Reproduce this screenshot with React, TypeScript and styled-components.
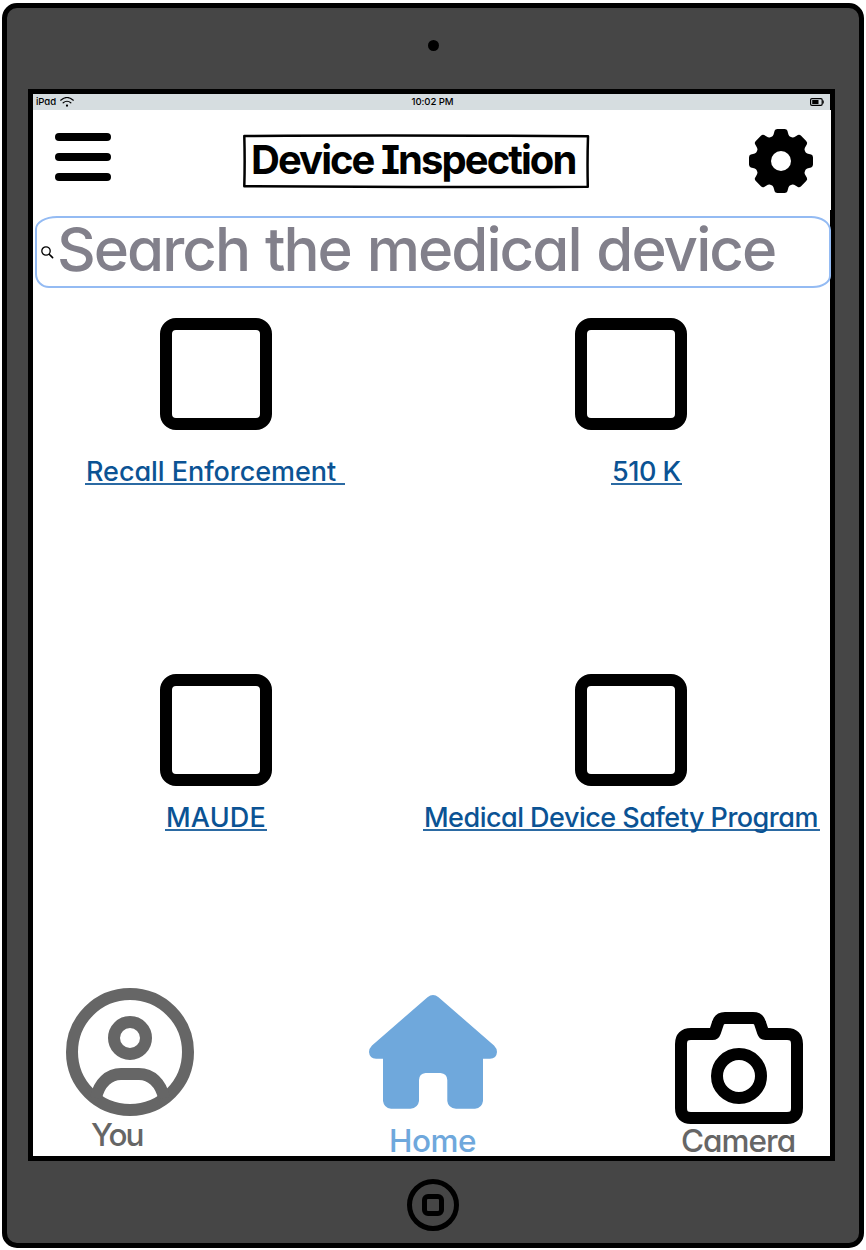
import React from "react";
import styled, { createGlobalStyle } from "styled-components";

const GlobalStyle = createGlobalStyle`
  * { box-sizing: border-box; }
  body { margin: 0; background: #fff; }
`;

const Page = styled.div`
  width: 866px;
  height: 1250px;
  padding: 3px 2px 2px;
  font-family: Inter, "Open Sans", "Liberation Sans", sans-serif;
  font-feature-settings: "cv11" 1;
`;

const Tablet = styled.div`
  display: flex;
  flex-direction: column;
  align-items: center;
  width: 862px;
  height: 1245px;
  border: 5px solid #000;
  border-radius: 15px;
  background: #464646;
`;

const Lens = styled.div`
  width: 11px;
  height: 11px;
  margin: 32px 0 38px;
  border-radius: 50%;
  background: #000;
`;

const Screen = styled.main`
  display: flex;
  flex-direction: column;
  width: 807px;
  height: 1072px;
  flex: none;
  margin-right: 3px;
  border: 5px solid #000;
  background: #fff;
`;

const HomeButton = styled.div`
  display: flex;
  align-items: center;
  justify-content: center;
  width: 52px;
  height: 52px;
  margin-top: 18px;
  border: 5px solid #000;
  border-radius: 50%;
`;

const HomeGlyph = styled.div`
  width: 22px;
  height: 22px;
  border: 5px solid #000;
  border-radius: 6px;
`;

const StatusBar = styled.div`
  display: grid;
  grid-template-columns: 1fr auto 1fr;
  align-items: center;
  height: 16px;
  flex: none;
  padding: 0 6px 0 3px;
  background: #d6dde0;
  font-size: 9.6px;
  font-weight: 500;
  line-height: 16px;
`;

const Carrier = styled.div`
  display: flex;
  align-items: center;
  gap: 4px;
  letter-spacing: -0.1px;
`;

const Clock = styled.time`
  margin-left: 5px;
  letter-spacing: -0.1px;
`;

const BatterySlot = styled.div`
  display: flex;
  justify-content: flex-end;
`;

const Header = styled.header`
  display: flex;
  align-items: flex-start;
  justify-content: space-between;
  height: 100px;
  flex: none;
  margin-right: -1px;
  padding: 19px 18px 0 22px;
  background: #fff;
`;

const MenuButton = styled.div`
  display: flex;
  flex-direction: column;
  gap: 12px;
  width: 56px;
  padding-top: 4px;
`;

const MenuBar = styled.span`
  height: 8px;
  border-radius: 4px;
  background: #000;
`;

const TitleBox = styled.div`
  position: relative;
  width: 348px;
  height: 56px;
  margin: 4px 28px 0 0;
  padding-left: 9px;
`;

const TitleFrame = styled.svg`
  position: absolute;
  inset: 0;
`;

const Title = styled.h1`
  margin: 0;
  font-size: 40px;
  font-weight: 700;
  line-height: 54px;
  letter-spacing: -1.95px;
  white-space: nowrap;
  font-feature-settings: "cv11" 1, "cv08" 1;
`;

const SearchField = styled.div`
  display: flex;
  align-items: center;
  width: 796px;
  height: 72px;
  flex: none;
  margin: 6px 0 0 2px;
  padding-left: 4px;
  border: 2px solid #94bbf3;
  border-radius: 22px 20px 18px 14px / 13px 14px 12px 14px;
  background: #fff;
`;

const Placeholder = styled.span`
  margin: -7px 0 0 3px;
  color: #82808b;
  font-size: 60px;
  font-weight: 550;
  line-height: 66px;
  letter-spacing: -1.95px;
  word-spacing: 1.7px;
  white-space: nowrap;
`;

const Tiles = styled.section`
  display: grid;
  grid-template-columns: 366px 431px;
  grid-template-rows: 356px 314px;
  flex: none;
  padding-top: 30px;
  height: 700px;
`;

const Tile = styled.div<{ $inset: number }>`
  padding-left: ${(p) => p.$inset}px;
`;

const Box = styled.div`
  width: 112px;
  height: 112px;
  border: 12px solid #000;
  border-radius: 16px;
`;

const TileLink = styled.a<{ $shift: number; $top: number; $width: number; $track: number }>`
  display: block;
  width: ${(p) => p.$width}px;
  height: 32px;
  margin: ${(p) => p.$top}px 0 0 ${(p) => p.$shift}px;
  padding-left: 1px;
  border-bottom: 2px solid #2b6aa3;
  color: #0b5394;
  font-size: 27px;
  font-weight: 550;
  line-height: 37px;
  letter-spacing: ${(p) => p.$track}px;
  white-space: pre;
`;

const TabBar = styled.nav`
  display: flex;
  align-items: flex-end;
  flex: 1;
  margin-right: -1px;
  padding-left: 33px;
`;

const Tab = styled.div<{ $color: string; $gapAfter: number }>`
  display: flex;
  flex-direction: column;
  width: 128px;
  margin-right: ${(p) => p.$gapAfter}px;
  color: ${(p) => p.$color};
`;

const TabLabel = styled.span<{ $left: number; $gap: number; $below: number; $track: number }>`
  margin: ${(p) => p.$gap}px 0 ${(p) => p.$below}px ${(p) => p.$left}px;
  font-size: 31.5px;
  font-weight: 550;
  line-height: 32px;
  letter-spacing: ${(p) => p.$track}px;
`;

const WifiIcon = () => (
  <svg width="14" height="10" viewBox="0 0 14 10" fill="none" stroke="#000" strokeWidth="1.2" strokeLinecap="round">
    <path d="M.7 3.2Q7-2.2 13.3 3.2M3.2 5.8Q7 2.7 10.8 5.8" />
    <circle cx="7" cy="8.6" r=".8" fill="#000" stroke="none" />
    <circle cx="7" cy="8.6" r=".5" />
  </svg>
);

const BatteryIcon = () => (
  <svg width="14" height="8" viewBox="0 0 14 8">
    <rect x=".6" y=".6" width="11.6" height="6.8" rx="1.3" fill="none" stroke="#000" strokeWidth="1.2" />
    <rect x="2.2" y="2" width="6.3" height="4" fill="#000" />
    <path d="M13.2 2.5V5.5" stroke="#000" strokeWidth="1.1" />
  </svg>
);

const GearIcon = () => (
  <svg width="64" height="64" viewBox="-32 -32 64 64">
    {[0, 45, 90, 135, 180, 225, 270, 315].map((angle) => (
      <path
        key={angle}
        transform={`rotate(${angle})`}
        d="M0 0L-10.5-23.8C-8.6-24.2-7.6-25.3-7-28L-6.4-30.2Q-5.9-32-3.6-32H3.6Q5.9-32 6.4-30.2L7-28C7.6-25.3 8.6-24.2 10.5-23.8Z"
      />
    ))}
    <circle r="24.6" />
    <circle r="10" fill="#fff" />
  </svg>
);

const SearchIcon = () => (
  <svg width="13" height="13" viewBox="0 0 13 13" fill="none" stroke="#000" strokeLinecap="round">
    <circle cx="5" cy="5" r="4.2" strokeWidth="1.3" />
    <path d="M8.2 8.2L11.6 11.6" strokeWidth="1.6" />
  </svg>
);

const UserIcon = () => (
  <svg width="128" height="128" viewBox="0 0 128 128" fill="none" stroke="currentColor" strokeWidth="12">
    <circle cx="64" cy="64" r="58" />
    <circle cx="64" cy="50" r="16" />
    <path d="M30 110C33 95 43 86 55 86H73C85 86 95 95 98 110" />
  </svg>
);

const HouseIcon = () => (
  <svg width="128" height="114" viewBox="0 0 128 114" fill="currentColor">
    <path d="M58.5 2.2Q64-2 69.5 2.2L125 50.5Q128 53.5 128 57Q127.5 63.7 121 63.8H114V106Q113 113 106 113.8H87Q79 113 78.3 106V85Q78 78.5 71.5 78H56.5Q50.3 78.5 50 85V106Q49 113 41.5 113.8H22Q15 113 14 106V63.8H7Q.5 63.5 0 57Q0 53.5 3 50.5Z" />
  </svg>
);

const CameraIcon = () => (
  <svg width="128" height="112" viewBox="0 0 128 112" fill="none" stroke="#000" strokeWidth="12" strokeLinejoin="round">
    <path d="M16 22H37.5Q39.3 22 40 20L43 11Q44.5 6 50 6H78Q83.5 6 85 11L88 20Q88.7 22 90.5 22H112Q122 22 122 32V96Q122 106 112 106H16Q6 106 6 96V32Q6 22 16 22Z" />
    <circle cx="64" cy="64" r="22" />
  </svg>
);

const tiles = [
  { label: "Recall Enforcement ", inset: 127, shift: -75, top: 23, width: 260, track: -0.05 },
  { label: "510 K", inset: 176, shift: 36, top: 23, width: 71, track: -0.5 },
  { label: "MAUDE", inset: 127, shift: 5, top: 13, width: 102, track: 0.2 },
  { label: "Medical Device Safety Program", inset: 176, shift: -152, top: 13, width: 397, track: -0.52 },
];

export default function App() {
  return (
    <Page>
      <GlobalStyle />
      <Tablet>
        <Lens />
        <Screen>
          <StatusBar>
            <Carrier>
              iPad
              <WifiIcon />
            </Carrier>
            <Clock>10:02 PM</Clock>
            <BatterySlot>
              <BatteryIcon />
            </BatterySlot>
          </StatusBar>
          <Header>
            <MenuButton>
              <MenuBar />
              <MenuBar />
              <MenuBar />
            </MenuButton>
            <TitleBox>
              <TitleFrame width="348" height="56" viewBox="0 0 348 56" fill="none" stroke="#000" strokeLinejoin="round">
                <path d="M2.3 3Q150 2 346 3.2Q345.2 28 345.8 53.8Q180 54.6 2.3 53.2Q3 28 2.3 3Z" strokeWidth="2.5" />
              </TitleFrame>
              <Title>Device Inspection</Title>
            </TitleBox>
            <GearIcon />
          </Header>
          <SearchField>
            <SearchIcon />
            <Placeholder>Search the medical device</Placeholder>
          </SearchField>
          <Tiles>
            {tiles.map((t) => (
              <Tile key={t.label} $inset={t.inset}>
                <Box />
                <TileLink $shift={t.shift} $top={t.top} $width={t.width} $track={t.track}>
                  {t.label}
                </TileLink>
              </Tile>
            ))}
          </Tiles>
          <TabBar>
            <Tab $color="#666666" $gapAfter={175}>
              <UserIcon />
              <TabLabel $left={25} $gap={3} $below={5} $track={-1.8}>You</TabLabel>
            </Tab>
            <Tab $color="#6fa8dc" $gapAfter={178}>
              <HouseIcon />
              <TabLabel $left={20} $gap={16} $below={-1} $track={-0.5}>Home</TabLabel>
            </Tab>
            <Tab $color="#666666" $gapAfter={0}>
              <CameraIcon />
              <TabLabel $left={6} $gap={1} $below={-1} $track={-1}>Camera</TabLabel>
            </Tab>
          </TabBar>
        </Screen>
        <HomeButton>
          <HomeGlyph />
        </HomeButton>
      </Tablet>
    </Page>
  );
}
